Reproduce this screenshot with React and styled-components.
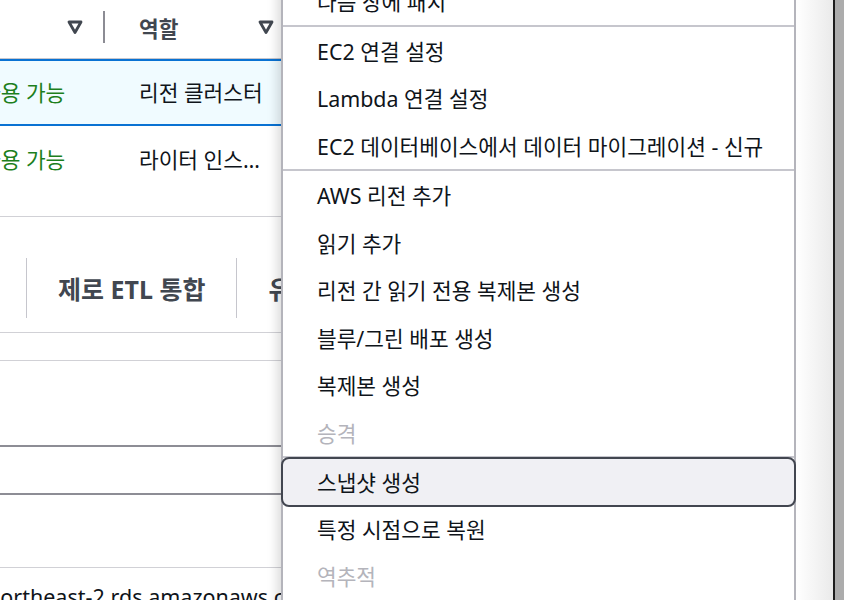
import { useLayoutEffect, useRef } from "react";
import styled, { createGlobalStyle } from "styled-components";

const menuGroups = [
  [{ label: "다음 창에 패치" }],
  [
    { label: "EC2 연결 설정" },
    { label: "Lambda 연결 설정" },
    { label: "EC2 데이터베이스에서 데이터 마이그레이션 - 신규" },
  ],
  [
    { label: "AWS 리전 추가" },
    { label: "읽기 추가" },
    { label: "리전 간 읽기 전용 복제본 생성" },
    { label: "블루/그린 배포 생성" },
    { label: "복제본 생성" },
    { label: "승격", disabled: true },
  ],
  [
    { label: "스냅샷 생성", highlighted: true },
    { label: "특정 시점으로 복원" },
    { label: "역추적", disabled: true },
    { label: "삭제" },
  ],
];

const rows = [
  { status: "사용 가능", role: "리전 클러스터", selected: true },
  { status: "사용 가능", role: "라이터 인스턴스" },
];

function SortIcon() {
  return (
    <svg width="16" height="16" viewBox="0 0 16 16">
      <path
        d="M2 3h12L8 13.5z"
        fill="none"
        stroke="#414750"
        strokeWidth="2.8"
        strokeLinejoin="round"
      />
    </svg>
  );
}

function StatusIcon() {
  return (
    <svg width="16" height="16" viewBox="0 0 16 16">
      <circle cx="8" cy="8" r="7" fill="none" stroke="#037f0c" strokeWidth="2" />
      <path d="M4.5 8.2l2.3 2.3 4.5-4.7" fill="none" stroke="#037f0c" strokeWidth="2" />
    </svg>
  );
}

export default function App() {
  const paneRef = useRef(null);

  useLayoutEffect(() => {
    // the table is scrolled sideways in the reference
    if (paneRef.current) paneRef.current.scrollLeft = 120;
  }, []);

  return (
    <>
      <GlobalStyle />
      <Screen>
        <Window>
          <Pane ref={paneRef}>
            <Track>
              <HeaderRow>
                <HeaderCell>
                  <span>상태</span>
                  <SortIcon />
                </HeaderCell>
                <HeaderCell>
                  <span>역할</span>
                  <SortIcon />
                </HeaderCell>
                <HeaderCell $last>
                  <span>엔진</span>
                </HeaderCell>
              </HeaderRow>

              {rows.map((row) => (
                <Row key={row.role} $selected={row.selected}>
                  <StatusCell>
                    <StatusIcon />
                    {row.status}
                  </StatusCell>
                  <RoleCell>{row.role}</RoleCell>
                  <Cell>Aurora MySQL</Cell>
                </Row>
              ))}

              <TabList>
                <Tab>구성</Tab>
                <TabDivider />
                <Tab>제로 ETL 통합</Tab>
                <TabDivider />
                <Tab>유지 관리 및 백업</Tab>
              </TabList>

              <Block $top="light" $height={84} $gap={27} />
              <Block $top="dark" $bottom="dark" $height={46} />
              <Block $height={72} />
              <EndpointRow>northeast-2.rds.amazonaws.com</EndpointRow>
            </Track>
          </Pane>
          <Gutter />

          <Menu>
            {menuGroups.map((group, gi) => (
              <Group key={gi} $first={gi === 0}>
                {group.map((item) =>
                  item.highlighted ? (
                    <HighlightedItem key={item.label}>{item.label}</HighlightedItem>
                  ) : (
                    <Item key={item.label} $disabled={item.disabled}>
                      {item.label}
                    </Item>
                  )
                )}
              </Group>
            ))}
          </Menu>
        </Window>
      </Screen>
    </>
  );
}

const GlobalStyle = createGlobalStyle`
  html, body {
    margin: 0;
    padding: 0;
  }
  body {
    background: #acacac;
    font-family: "Noto Sans", "Noto Sans CJK KR", sans-serif;
    color: #0f141a;
  }
`;

const Screen = styled.div`
  display: flex;
  width: 844px;
  height: 600px;
  overflow: hidden;
`;

const Window = styled.div`
  position: relative;
  display: flex;
  flex: 0 0 833px;
  background: #ffffff;
  border-right: 2px solid #1c1c1c;
`;

const Pane = styled.div`
  flex: 0 0 796px;
  overflow: hidden;
`;

const Track = styled.div`
  width: 1000px;
`;

const Gutter = styled.div`
  flex: 1;
  background: linear-gradient(to right, #ffffff, #eaeaea);
`;

const columns = "224px 191px 1fr";

const HeaderRow = styled.div`
  display: grid;
  grid-template-columns: ${columns};
  height: 58px;
  border-bottom: 1px solid #c6c6cd;
`;

const HeaderCell = styled.div`
  position: relative;
  display: flex;
  align-items: center;
  justify-content: space-between;
  padding: 0 21px 4px 35px;
  font-size: 21.4px;
  font-weight: 700;
  color: #414750;

  &::after {
    content: "";
    display: ${(p) => (p.$last ? "none" : "block")};
    position: absolute;
    right: -1px;
    top: 11px;
    width: 2px;
    height: 32px;
    background: #8c8c94;
  }
`;

const Row = styled.div`
  display: grid;
  grid-template-columns: ${columns};
  height: ${(p) => (p.$selected ? "63px" : "70px")};
  padding-top: ${(p) => (p.$selected ? "0" : "20px")};
  align-items: ${(p) => (p.$selected ? "center" : "start")};
  background: ${(p) => (p.$selected ? "#f0fbff" : "#ffffff")};
  border-top: ${(p) => (p.$selected ? "2px solid #0972d3" : "none")};
  border-bottom: ${(p) => (p.$selected ? "2px solid #0972d3" : "1px solid #d1d1d6")};
  font-size: 21.4px;
  line-height: 28px;
`;

const Cell = styled.div`
  padding-left: 35px;
  white-space: nowrap;
`;

const StatusCell = styled.div`
  display: flex;
  align-items: center;
  gap: 8px;
  padding-left: 77px;
  color: #1d7f1d;
  white-space: nowrap;
`;

const RoleCell = styled.div`
  padding-left: 35px;
  max-width: 138px;
  white-space: nowrap;
  overflow: hidden;
  text-overflow: ellipsis;
`;

const TabList = styled.div`
  display: flex;
  align-items: center;
  height: 89px;
  margin-top: 26px;
  padding-left: 38px;
  border-bottom: 1px solid #d1d1d6;
`;

const Tab = styled.div`
  padding: 0 31px;
  font-size: 25px;
  font-weight: 700;
  color: #414750;
  white-space: nowrap;
`;

const TabDivider = styled.div`
  width: 1px;
  height: 60px;
  background: #c6c6cd;
`;

const ruleColor = { light: "1px solid #d1d1d6", dark: "2px solid #8d8d95" };

const Block = styled.div`
  height: ${(p) => p.$height}px;
  margin-top: ${(p) => p.$gap || 0}px;
  border-top: ${(p) => (p.$top ? ruleColor[p.$top] : "none")};
  border-bottom: ${(p) => (p.$bottom ? ruleColor[p.$bottom] : "none")};
`;

const EndpointRow = styled.div`
  border-top: 1px solid #d1d1d6;
  padding: 17px 0 0 107px;
  font-size: 21.5px;
  line-height: 24px;
  white-space: nowrap;
`;

const Menu = styled.div`
  position: absolute;
  top: -25px;
  left: 281px;
  width: 511px;
  background: #ffffff;
  border: 2px solid #b4b4bb;
  box-shadow: -6px 0 10px -2px rgba(0, 0, 0, 0.14);
  z-index: 5;
`;

const Group = styled.div`
  border-top: ${(p) => (p.$first ? "none" : "2px solid #c6c6cd")};
`;

const Item = styled.div`
  display: flex;
  align-items: center;
  box-sizing: border-box;
  height: 47.5px;
  padding-left: 34px;
  font-size: 21.4px;
  color: ${(p) => (p.$disabled ? "#b4b4bb" : "#0f141a")};
  white-space: nowrap;
`;

const HighlightedItem = styled(Item)`
  position: relative;
  height: 49.5px;
  margin: -1px -2px -2px;
  border: 2px solid #424650;
  border-radius: 8px;
  background: #f0f0f4;
`;
